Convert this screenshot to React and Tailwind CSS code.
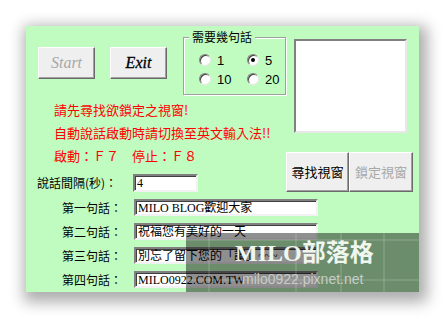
import React from "react";

const cjk = { fontFamily: '"Noto Sans CJK TC", "Liberation Sans", sans-serif' };
const serifMix = { fontFamily: '"Liberation Serif", "Noto Sans CJK TC", serif' };
const serifOnly = { fontFamily: '"Liberation Serif", "DejaVu Serif", serif' };
const sans = { fontFamily: '"Liberation Sans", "Noto Sans CJK TC", sans-serif' };

function Radio({ checked, label }) {
  return (
    <div className="flex items-center h-[12px]">
      <div className="relative w-[12px] h-[12px] rounded-full bg-white border border-t-[#808080] border-l-[#808080] border-r-[#e8e8e8] border-b-[#e8e8e8] shadow-[inset_1px_1px_0_#404040]">
        {checked && (
          <div className="absolute left-[3px] top-[3px] w-[4px] h-[4px] rounded-full bg-black" />
        )}
      </div>
      <span className="ml-[6px] text-[13px] leading-none text-black" style={sans}>
        {label}
      </span>
    </div>
  );
}

function Field({ value, width }) {
  return (
    <div
      className="h-[17px] bg-white border-2 border-t-[#808080] border-l-[#808080] border-r-[#f2f2f2] border-b-[#f2f2f2] shadow-[inset_1px_1px_0_#404040] flex items-center pl-[2px] text-[12px] leading-none text-black overflow-hidden whitespace-nowrap"
      style={{ ...serifMix, width }}
    >
      {value}
    </div>
  );
}

function Row({ label, value }) {
  return (
    <div className="flex items-center h-[17px]">
      <div className="w-[108px] pl-[36px] text-[12px] leading-none text-black whitespace-nowrap" style={cjk}>
        {label}
      </div>
      <Field value={value} width={184} />
    </div>
  );
}

const btn =
  "bg-[#efefef] border border-t-white border-l-white border-r-[#6a6a6a] border-b-[#6a6a6a] shadow-[inset_-1px_-1px_0_#a0a0a0] flex items-center justify-center";

export default function App() {
  return (
    <div className="w-[446px] h-[319px] bg-white overflow-hidden pt-[26px] pl-[26px]">
      <div className="relative w-[393px] h-[266px] bg-[#c0fcc0] overflow-hidden shadow-[3px_5px_14px_5px_rgba(0,0,0,0.33)]">
        <div className="flex">
          {/* left column */}
          <div className="w-[260px] flex flex-col">
            <div className="flex items-start pt-[11px]">
              <div className={`${btn} ml-[12px] mt-[10px] w-[57px] h-[32px]`}>
                <span className="italic text-[16px] text-[#a8a8a8]" style={serifOnly}>Start</span>
              </div>
              <div className={`${btn} ml-[15px] mt-[10px] w-[57px] h-[32px]`}>
                <span className="italic text-[16px] text-black [-webkit-text-stroke:0.3px_black]" style={serifOnly}>Exit</span>
              </div>
              <div className="relative ml-[16px] w-[103px] h-[58px] border border-[#a0a0a0] shadow-[1px_1px_0_#ffffff,inset_1px_1px_0_#ffffff]">
                <span
                  className="absolute left-[5px] top-[-9px] px-[3px] bg-[#c0fcc0] text-[12px] leading-[16px] text-black whitespace-nowrap"
                  style={cjk}
                >
                  需要幾句話
                </span>
                <div className="grid grid-cols-[48px_48px] gap-y-[7px] pl-[15px] pt-[16px]">
                  <Radio label="1" />
                  <Radio label="5" checked />
                  <Radio label="10" />
                  <Radio label="20" />
                </div>
              </div>
            </div>
            <div className="mt-[3px] pl-[28px] text-[13px] leading-[23px] text-[#ff0000] whitespace-nowrap" style={cjk}>
              <div>請先尋找欲鎖定之視窗!</div>
              <div>自動說話啟動時請切換至英文輸入法!!</div>
              <div>啟動：Ｆ７　停止：Ｆ８</div>
            </div>
            <div className="mt-[7px] flex items-center h-[18px]">
              <div className="w-[107px] pl-[11px] text-[12px] leading-none text-black whitespace-nowrap" style={cjk}>
                說話間隔(秒)：
              </div>
              <div
                className="w-[65px] h-[18px] bg-white border-2 border-t-[#808080] border-l-[#808080] border-r-[#f2f2f2] border-b-[#f2f2f2] shadow-[inset_1px_1px_0_#404040] flex items-center pl-[2px] text-[12px] leading-none text-black"
                style={serifMix}
              >
                4
              </div>
            </div>
          </div>
          {/* right column */}
          <div className="flex flex-col">
            <div className="ml-[8px] mt-[13px] w-[113px] h-[94px] bg-white border-2 border-t-[#808080] border-l-[#808080] border-r-[#e8e8e8] border-b-[#e8e8e8]" />
            <div className="mt-[19px] flex">
              <div className={`${btn} w-[63px] h-[40px]`}>
                <span className="text-[13px] text-black" style={cjk}>尋找視窗</span>
              </div>
              <div className={`${btn} w-[64px] h-[40px]`}>
                <span className="text-[13px] text-[#a8a8a8]" style={cjk}>鎖定視窗</span>
              </div>
            </div>
          </div>
        </div>

        <div className="mt-[7px] flex flex-col gap-[7px]">
          <Row label="第一句話：" value="MILO BLOG歡迎大家" />
          <Row label="第二句話：" value="祝福您有美好的一天" />
          <Row label="第三句話：" value="別忘了留下您的「讚」~~~" />
          <Row label="第四句話：" value="MILO0922.COM.TW" />
        </div>

        {/* watermark overlay */}
        <div className="absolute right-0 bottom-0 w-[233px] h-[59px] bg-[rgba(0,0,0,0.44)]">
          <svg className="absolute inset-0" width="233" height="59" viewBox="0 0 233 59">
            <g stroke="rgba(255,255,255,0.12)" strokeWidth="2">
              <line x1="23" y1="0" x2="23" y2="59" />
              <line x1="110" y1="0" x2="110" y2="59" />
              <line x1="155" y1="0" x2="155" y2="59" />
              <line x1="198" y1="0" x2="198" y2="59" />
              <line x1="0" y1="7" x2="233" y2="7" />
              <line x1="0" y1="47" x2="233" y2="47" />
            </g>
          </svg>
          <div
            className="absolute left-[49px] top-[8px] text-[24px] font-bold leading-none text-[#eef6ee] whitespace-nowrap"
            style={serifMix}
          >
            <span style={serifOnly}>MILO</span>部落格
          </div>
          <div
            className="absolute left-[56px] top-[39px] text-[14px] leading-none text-[#c8ccc8] whitespace-nowrap"
            style={sans}
          >
            milo0922.pixnet.net
          </div>
        </div>
      </div>
    </div>
  );
}
